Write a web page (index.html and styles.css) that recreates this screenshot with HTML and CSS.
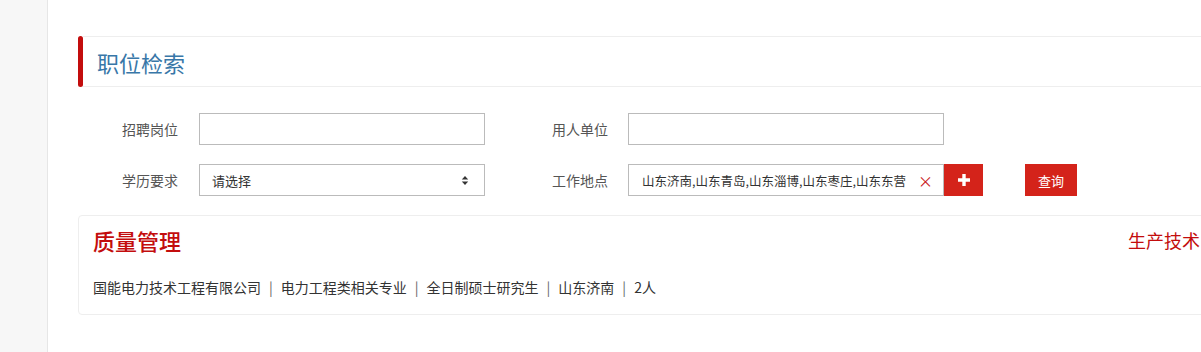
FILE: index.html
```html
<!DOCTYPE html>
<html lang="zh-CN">
<head>
  <meta charset="UTF-8">
  <title>职位检索</title>
  <link rel="stylesheet" href="styles.css">
</head>
<body>

<div class="sidebar"></div>

<div class="main">
  <div class="section-head">
    <span class="bar"></span>
    <div class="head-box">
      <h2>职位检索</h2>
    </div>
  </div>

  <div class="search-form">
    <div class="row">
      <label class="lbl">招聘岗位</label>
      <input type="text" class="field">
      <label class="lbl">用人单位</label>
      <input type="text" class="field wide">
    </div>
    <div class="row">
      <label class="lbl">学历要求</label>
      <div class="field select-box">
        <span>请选择</span>
        <svg class="arrows" viewBox="0 0 8 12" xmlns="http://www.w3.org/2000/svg">
          <path d="M4 1 L7.5 5 H0.5 Z"/>
          <path d="M4 11 L7.5 7 H0.5 Z"/>
        </svg>
      </div>
      <label class="lbl">工作地点</label>
      <div class="field wide place-box">
        <span class="place-text">山东济南,山东青岛,山东淄博,山东枣庄,山东东营</span>
        <span class="clear">×</span>
      </div>
      <button class="add-btn">
        <svg viewBox="0 0 12 12" xmlns="http://www.w3.org/2000/svg">
          <path d="M4.3 0 H7.7 V4.3 H12 V7.7 H7.7 V12 H4.3 V7.7 H0 V4.3 H4.3 Z"/>
        </svg>
      </button>
      <button class="search-btn">查询</button>
    </div>
  </div>

  <div class="job-card">
    <div class="job-top">
      <h3>质量管理</h3>
      <span class="job-type">生产技术</span>
    </div>
    <div class="job-info">
      国能电力技术工程有限公司<span class="sep">|</span>电力工程类相关专业<span class="sep">|</span>全日制硕士研究生<span class="sep">|</span>山东济南<span class="sep">|</span>2人
    </div>
  </div>
</div>

</body>
</html>
```

FILE: styles.css
```css
* {
  box-sizing: border-box;
}

body {
  margin: 0;
  padding: 0;
  display: flex;
  height: 352px;
  overflow: hidden;
  background: #fff;
  font-family: "Noto Sans CJK SC", "Noto Sans", sans-serif;
  color: #333;
}

.sidebar {
  flex: 0 0 48px;
  background: #f7f7f7;
  border-right: 1px solid #e6e6e6;
}

.main {
  flex: 0 0 1168px;
  padding: 36px 0 0 30px;
}

.section-head {
  display: flex;
  height: 51px;
}

.bar {
  flex: 0 0 5px;
  background: #c30d0d;
  border-radius: 3px;
}

.head-box {
  flex: 1;
  border-top: 1px solid #eee;
  border-bottom: 1px solid #eee;
  padding-left: 14px;
  display: flex;
  align-items: center;
}

h2 {
  margin: 0;
  font-size: 22px;
  font-weight: normal;
  color: #3877a8;
}

.search-form {
  padding-top: 26px;
}

.row {
  display: flex;
  align-items: center;
  margin-bottom: 19px;
}

.lbl {
  width: 100px;
  text-align: right;
  font-size: 14px;
  color: #555;
  margin-right: 21px;
}

.field {
  width: 286px;
  height: 32px;
  border: 1px solid #bbb;
  margin: 0;
  padding: 0 12px;
  font-size: 13px;
  font-family: inherit;
  background: #fff;
}

.row .lbl:nth-of-type(2) {
  margin-left: 23px;
  margin-right: 20px;
}

.field.wide {
  width: 316px;
}

.select-box {
  display: flex;
  align-items: center;
  justify-content: space-between;
  color: #333;
}

.arrows {
  width: 8px;
  height: 11px;
  fill: #333;
  margin-right: 3px;
}

.place-box {
  display: flex;
  align-items: center;
  padding-left: 13px;
  padding-right: 10px;
  overflow: hidden;
  white-space: nowrap;
}

.place-text {
  flex: 1;
  overflow: hidden;
  color: #333;
  font-size: 12.5px;
}

.clear {
  color: #c81616;
  font-size: 15px;
  margin-left: 6px;
}

.add-btn {
  width: 39px;
  height: 32px;
  border: none;
  background: #d4231a;
  padding: 0;
  display: flex;
  align-items: center;
  justify-content: center;
  cursor: pointer;
}

.add-btn svg {
  width: 12px;
  height: 12px;
  fill: #fff;
}

.search-btn {
  margin-left: 42px;
  width: 52px;
  height: 32px;
  border: none;
  background: #d4231a;
  color: #fff;
  font-size: 13px;
  font-family: inherit;
  padding: 0;
  cursor: pointer;
}

.job-card {
  border: 1px solid #eee;
  border-radius: 4px;
  height: 100px;
  padding: 9px 15px 0 14px;
}

.job-top {
  display: flex;
  justify-content: space-between;
  align-items: center;
  height: 30px;
}

h3 {
  margin: 0;
  font-size: 22px;
  font-weight: 500;
  color: #c30d0d;
}

.job-type {
  font-size: 18px;
  color: #c30d0d;
}

.job-info {
  margin-top: 22px;
  font-size: 14px;
  color: #333;
}

.sep {
  color: #666;
  margin: 0 8px;
}
```
